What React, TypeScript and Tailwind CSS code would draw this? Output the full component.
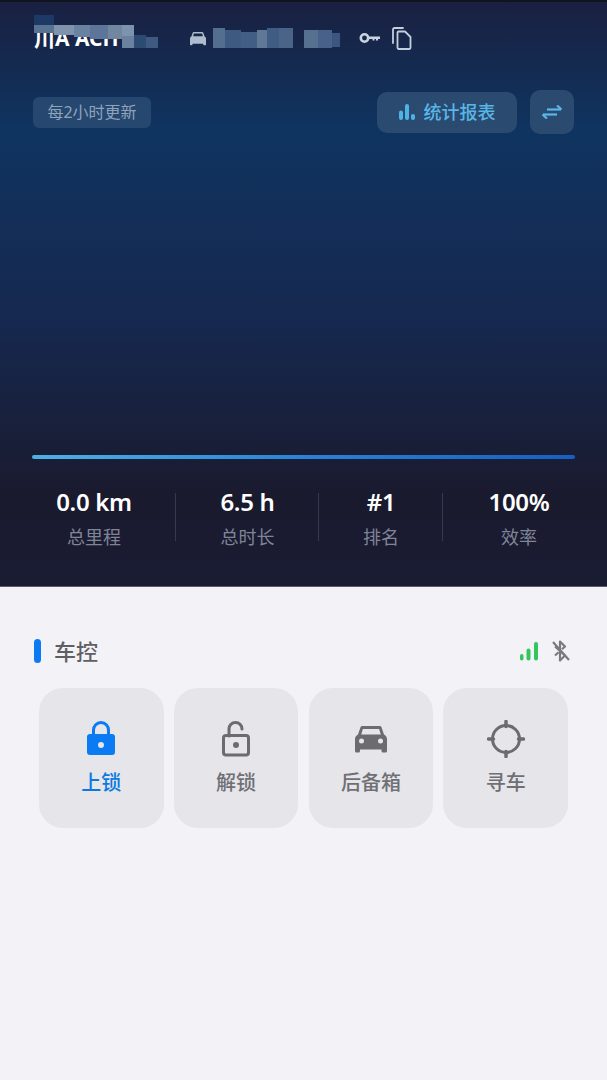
const FONT = "font-['Noto_Sans','Noto_Sans_CJK_SC',sans-serif]";

const mosaic: [number, number, number, number, string][] = [
  [34, 15, 20, 10, "#1d3a66"],
  [34, 25, 20, 8, "#5a7292"],
  [54, 25, 20, 10, "#7f93ad"],
  [74, 25, 16, 12, "#6a82a2"],
  [90, 25, 18, 14, "#5c7598"],
  [108, 25, 14, 14, "#70879f"],
  [122, 25, 12, 16, "#7d92ac"],
  [122, 36, 14, 12, "#6a819f"],
  [134, 35, 12, 13, "#2d4a72"],
  [146, 37, 12, 11, "#3e5a80"],
  [213, 28, 12, 20, "#546e90"],
  [225, 30, 16, 18, "#3f5a80"],
  [241, 32, 16, 16, "#435e85"],
  [257, 30, 10, 18, "#5f7896"],
  [267, 28, 12, 20, "#405c82"],
  [279, 28, 14, 20, "#4a6488"],
  [304, 30, 14, 18, "#56708f"],
  [318, 30, 14, 18, "#46618a"],
  [332, 33, 8, 14, "#3b5680"],
];

function Mosaic() {
  return (
    <>
      {mosaic.map(([x, y, w, h, c], i) => (
        <div key={i} className="absolute" style={{ left: x, top: y, width: w, height: h, background: c }} />
      ))}
    </>
  );
}

function Stat({ value, label, cls, divider }: { value: string; label: string; cls: string; divider?: boolean }) {
  return (
    <div className={`${cls} relative flex flex-col items-center`}>
      <div className="text-[24px] leading-[32px] font-semibold text-white tracking-[-0.3px]">{value}</div>
      <div className="mt-[6px] text-[18px] leading-[26px] text-[#7f8597]">{label}</div>
      {divider && <div className="absolute right-0 top-[7px] h-[48px] w-px bg-[#343a52]" />}
    </div>
  );
}

function Lock({ open, color }: { open?: boolean; color: string }) {
  if (open) {
    return (
      <svg width="30" height="38" viewBox="0 0 30 38" fill="none">
        <path d="M8 16V9a6.5 6.5 0 0 1 13 0" stroke={color} strokeWidth="3" strokeLinecap="round" />
        <rect x="2.5" y="15.5" width="25" height="19.5" rx="2.5" stroke={color} strokeWidth="3" />
        <circle cx="15" cy="25" r="3" fill={color} />
      </svg>
    );
  }
  return (
    <svg width="30" height="38" viewBox="0 0 30 38" fill="none">
      <path d="M7.5 16V10a7.5 7.5 0 0 1 15 0v6" stroke={color} strokeWidth="3" />
      <rect x="1" y="14" width="28" height="21" rx="3" fill={color} />
      <circle cx="15" cy="25" r="3" fill="#e5e5ea" />
    </svg>
  );
}

function Car({ color, size = 32 }: { color: string; size?: number }) {
  return (
    <svg width={size} height={size * 0.875} viewBox="0 0 32 28" fill={color}>
      <path d="M7.5 1h17c1 0 1.7.5 2.1 1.4L29 9.5c1.500 1 3 2.200 3 4.500V26a1.500 1.500 0 0 1-1.500 1.500h-2.500a1.500 1.500 0 0 1-1.500-1.500v-1.500H5V26a1.500 1.500 0 0 1-1.500 1.500H1.500A1.500 1.500 0 0 1 0 26V14c0-2.300 1.500-3.500 3-4.500l2.400-7.100C5.800 1.500 6.500 1 7.500 1Zm.4 3L6.200 9.500h19.600L24.100 4H7.900Z" fillRule="evenodd" />
      <circle cx="6.500" cy="16" r="2.500" fill="#e5e5ea" />
      <circle cx="25.500" cy="16" r="2.500" fill="#e5e5ea" />
    </svg>
  );
}

function Target({ color }: { color: string }) {
  return (
    <svg width="38" height="38" viewBox="0 0 38 38" fill="none">
      <circle cx="19" cy="19" r="13.500" stroke={color} strokeWidth="3" />
      <path d="M19 1.500v5M19 31.500v5M1.500 19h5M31.500 19h5" stroke={color} strokeWidth="3.500" strokeLinecap="round" />
    </svg>
  );
}

function Card({ icon, label, active }: { icon: React.ReactNode; label: string; active?: boolean }) {
  return (
    <div className="h-[140px] w-[124.500px] rounded-[24px] bg-[#e5e5ea] flex flex-col items-center">
      <div className="mt-[31px] h-[40px] flex items-center justify-center">{icon}</div>
      <div className={`mt-[9px] text-[20px] leading-[30px] font-medium ${active ? "text-[#0a7ae0]" : "text-[#6f6f74]"}`}>{label}</div>
    </div>
  );
}

export default function App() {
  return (
    <div className={`${FONT} relative h-[1080px] w-full overflow-hidden bg-[#f2f2f7]`}>
      <div className="relative h-[587px] bg-[linear-gradient(180deg,#1a2040_0%,#0f3460_22%,#16284f_55%,#1a1a2e_85%,#1a1c34_100%)] border-b border-[#5a5c66]">
        <div className="h-[2px] bg-[#10141f]" />

        {/* top row */}
        <div className="flex h-[48px] items-center pl-[34px] pt-[24px]">
          <div className="w-[156px] text-[21px] leading-[26px] font-bold text-white">川A ACH</div>
          <svg className="mt-[1px]" width="16" height="15" viewBox="0 0 32 28" fill="#aebccd">
            <path d="M7.500 1h17c1 0 1.700.5 2.100 1.400L29 9.500c1.500 1 3 2.200 3 4.500V26a1.500 1.500 0 0 1-1.500 1.500h-2.500a1.500 1.500 0 0 1-1.500-1.500v-1.500H5V26a1.500 1.500 0 0 1-1.500 1.500H1.500A1.500 1.500 0 0 1 0 26V14c0-2.300 1.500-3.500 3-4.500l2.400-7.100C5.800 1.500 6.500 1 7.500 1Zm.4 3L6.200 9.500h19.600L24.100 4H7.900Z" fillRule="evenodd" />
          </svg>
          <div className="ml-[153px] flex items-center">
            <svg width="22" height="12" viewBox="0 0 22 12" fill="none">
              <circle cx="5.500" cy="6" r="3.700" stroke="#c9d3df" strokeWidth="2.600" />
              <path d="M9.500 4.500H21v2.500h-2v1.500h-2V7h-1.500v1.500h-2V7H9.500Z" fill="#c9d3df" />
            </svg>
            <svg className="ml-[11px]" width="20" height="23" viewBox="0 0 20 23" fill="none" stroke="#c3cfdc" strokeWidth="1.800" strokeLinejoin="round">
              <path d="M1 16V2.500A1.500 1.500 0 0 1 2.500 1H11" strokeLinecap="round" />
              <path d="M5.500 5.500A1.200 1.200 0 0 1 6.700 4.500H13l5.500 5.500v10.800a1.200 1.200 0 0 1-1.200 1.200H6.700a1.200 1.200 0 0 1-1.200-1.200Z" />
            </svg>
          </div>
        </div>

        {/* second row */}
        <div className="mt-[40px] flex h-[44px] items-center pl-[33px] pr-[33px]">
          <div className="flex h-[31px] w-[118px] items-center justify-center rounded-[6px] bg-[#26476f] text-[16px] text-[#8ea4bb]">每2小时更新</div>
          <div className="ml-auto flex h-[41px] w-[140px] items-center justify-center gap-[9px] rounded-[10px] bg-[#2a4a70] text-[18px] font-medium text-[#58b6e6]">
            <svg width="16" height="16" viewBox="0 0 16 16" fill="#4fb3e8">
              <rect x="0" y="6.500" width="4" height="9.500" rx="2" />
              <rect x="6" y="0" width="4" height="16" rx="2" />
              <rect x="12" y="10" width="4" height="6" rx="2" />
            </svg>
            <span>统计报表</span>
          </div>
          <div className="ml-[13px] flex h-[44px] w-[44px] items-center justify-center rounded-[10px] bg-[#2a4a70]">
            <svg width="20" height="14" viewBox="0 0 20 14" fill="none" stroke="#5ab8ea" strokeWidth="2.200">
              <path d="M5 4.500H19" />
              <path d="M15 .5l4.500 4" />
              <path d="M1 9.500H15" />
              <path d="M5 13.500l-4.500-4" />
            </svg>
          </div>
        </div>

        <div className="ml-[32px] mt-[321px] h-[4px] w-[543px] rounded-full bg-[linear-gradient(90deg,#4fb0e6_0%,#2a83d6_50%,#1560c0_100%)]" />

        <div className="mt-[27px] ml-[12px] flex">
          <Stat value="0.0 km" label="总里程" cls="w-[164px]" divider />
          <Stat value="6.5 h" label="总时长" cls="w-[143px]" divider />
          <Stat value="#1" label="排名" cls="w-[124px]" divider />
          <Stat value="100%" label="效率" cls="w-[152px]" />
        </div>

        <Mosaic />
      </div>

      {/* section header */}
      <div className="mt-[51px] flex h-[26px] items-center pl-[34px] pr-[37px]">
        <div className="h-[24px] w-[7px] rounded-full bg-[#0a7bf2]" />
        <div className="ml-[13px] text-[22px] leading-[26px] font-medium text-[#5f5f63]">车控</div>
        <svg className="ml-auto" width="18" height="19" viewBox="0 0 18 19" fill="#35c55c">
          <rect x="0" y="12" width="3.500" height="6.500" rx="1.700" />
          <rect x="6.500" y="6.500" width="4" height="12" rx="2" />
          <rect x="14" y="0" width="4" height="18.500" rx="2" />
        </svg>
        <svg className="ml-[14px]" width="18" height="22" viewBox="0 0 18 22" fill="none" stroke="#7a7a80" strokeWidth="2.200" strokeLinejoin="round">
          <path d="M3 6.500l10 9-5 5V1.500l5 5-3 2.700" />
          <path d="M3 15.500l3.500-3.200" />
          <path d="M1 2l16 18" />
        </svg>
      </div>

      {/* cards */}
      <div className="ml-[39px] mt-[24px] flex w-[529px] justify-between">
        <Card icon={<Lock color="#0a7bf2" />} label="上锁" active />
        <Card icon={<Lock open color="#6b6b70" />} label="解锁" />
        <Card icon={<Car color="#6b6b70" />} label="后备箱" />
        <Card icon={<Target color="#6b6b70" />} label="寻车" />
      </div>
    </div>
  );
}
